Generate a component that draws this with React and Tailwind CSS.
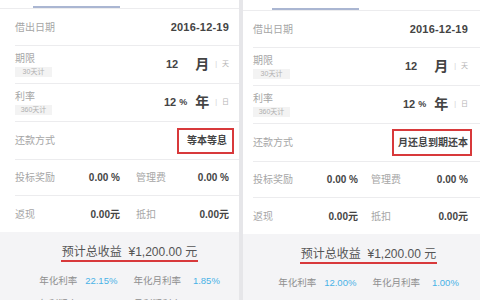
import React from "react";

const FONT = "font-['Liberation_Sans','Noto_Sans_CJK_SC',sans-serif]";

function Panel({ side }) {
  const left = side === "left";
  const rowPad = left ? "ml-[15px] pr-[10px]" : "ml-[10px] pr-[12px]";
  return (
    <div className={left ? "w-[239px] shrink-0 flex flex-col bg-white" : "flex-1 flex flex-col bg-white"}>
      {/* tab bar */}
      <div className={left ? "shrink-0 -mt-[14px] flex border-b border-[#ececee]" : "shrink-0 -mt-[12px] flex border-b border-[#ececee]"}>
        <div className={left ? "ml-[33px] w-[87px] flex flex-col items-center" : "ml-[29px] w-[87px] flex flex-col items-center"}>
          <div className="text-[11px] leading-[14px] text-[#333]">本息计算</div>
          <div className="mt-[6px] h-[2px] w-full bg-[#aab6d2]" />
        </div>
        <div className="ml-[1px] w-[87px] flex flex-col items-center">
          <div className="text-[11px] leading-[14px] text-[#aaa]">日利率计算</div>
          <div className="mt-[6px] h-[2px] w-full" />
        </div>
      </div>

      {/* row 1 */}
      <div className={`${rowPad} shrink-0 h-[37px] flex items-center justify-between border-b border-[#ececee]`}>
        <span className="text-[10px] text-[#a6a6a6]">借出日期</span>
        <span className="text-[11px] font-bold text-[#444] tracking-[0.2px]">2016-12-19</span>
      </div>

      {/* row 2 */}
      <div className={`${rowPad} shrink-0 h-[38px] flex items-center justify-between border-b border-[#ececee]`}>
        <div className="flex flex-col items-start">
          <span className="text-[10px] leading-[12px] text-[#a6a6a6]">期限</span>
          <span className="mt-[2px] h-[10px] w-[37px] bg-[#f3f3f3] text-[7px] leading-[10px] text-[#b0b0b0] text-center">30天计</span>
        </div>
        <div className="flex items-center">
          <span className="text-[11px] font-bold text-[#444]">12</span>
          <span className="ml-[17px] text-[14px] font-bold text-[#444]">月</span>
          <span className="ml-[6px] text-[7px] text-[#cfcfcf]">|</span>
          <span className="ml-[5px] text-[7px] text-[#b5b5b5]">天</span>
        </div>
      </div>

      {/* row 3 */}
      <div className={`${rowPad} shrink-0 h-[38px] flex items-center justify-between border-b border-[#ececee]`}>
        <div className="flex flex-col items-start">
          <span className="text-[10px] leading-[12px] text-[#a6a6a6]">利率</span>
          <span className="mt-[2px] h-[10px] w-[37px] bg-[#f3f3f3] text-[7px] leading-[10px] text-[#b0b0b0] text-center">360天计</span>
        </div>
        <div className="flex items-center">
          <span className="text-[11px] font-bold text-[#444]">12</span>
          <span className="ml-[3px] text-[9px] font-bold text-[#444]">%</span>
          <span className="ml-[8px] text-[14px] font-bold text-[#444]">年</span>
          <span className="ml-[6px] text-[7px] text-[#cfcfcf]">|</span>
          <span className="ml-[5px] text-[7px] text-[#b5b5b5]">日</span>
        </div>
      </div>

      {/* row 4 */}
      <div className={`${rowPad} shrink-0 h-[38px] flex items-center justify-between border-b border-[#ececee]`}>
        <span className="text-[10px] text-[#a6a6a6]">还款方式</span>
        {left ? (
          <span className="-mr-[5px] h-[26px] w-[57px] flex items-center justify-end pr-[5px] border-2 border-[#d8393b] text-[10px] font-bold text-[#444]">等本等息</span>
        ) : (
          <span className="-mr-[4px] h-[27px] w-[80px] flex items-center justify-end pr-[2px] border-2 border-[#d8393b] text-[10px] font-bold text-[#444] whitespace-nowrap">月还息到期还本</span>
        )}
      </div>

      {/* row 5 */}
      <div className={`${rowPad} shrink-0 h-[36px] flex items-center border-b border-[#ececee]`}>
        <div className="w-[105px] flex items-center justify-between">
          <span className="text-[10px] text-[#a6a6a6]">投标奖励</span>
          <span className="text-[10px] font-bold text-[#444]">0.00 %</span>
        </div>
        <div className={left ? "ml-[16px] flex-1 flex items-center justify-between" : "ml-[13px] flex-1 flex items-center justify-between"}>
          <span className="text-[10px] text-[#a6a6a6]">管理费</span>
          <span className="text-[10px] font-bold text-[#444]">0.00 %</span>
        </div>
      </div>

      {/* row 6 */}
      <div className={`${rowPad} shrink-0 h-[36px] flex items-center`}>
        <div className="w-[105px] flex items-center justify-between">
          <span className="text-[10px] text-[#a6a6a6]">返现</span>
          <span className="text-[10px] font-bold text-[#444]">0.00元</span>
        </div>
        <div className={left ? "ml-[16px] flex-1 flex items-center justify-between" : "ml-[13px] flex-1 flex items-center justify-between"}>
          <span className="text-[10px] text-[#a6a6a6]">抵扣</span>
          <span className="text-[10px] font-bold text-[#444]">0.00元</span>
        </div>
      </div>

      {/* summary */}
      <div className="flex-1 shrink-0 bg-[#f4f4f6] flex flex-col items-center pt-[12px]">
        <div className={left ? "ml-[20px] flex flex-col items-center" : "ml-[14px] flex flex-col items-center"}>
          <div className="text-[12px] leading-[16px] text-[#555] border-b-2 border-[#d8393b] px-[1px] whitespace-nowrap">
            预计总收益&nbsp;&nbsp;¥1,200.00 元
          </div>
          <div className="mt-[12px] flex items-center text-[9.5px] leading-[14px] whitespace-nowrap">
            <span className="text-[#8f8f8f]">年化利率</span>
            <span className="ml-[8px] text-[#49b2e6]">{left ? "22.15%" : "12.00%"}</span>
            <span className="ml-[16px] text-[#8f8f8f]">年化月利率</span>
            <span className="ml-[12px] text-[#49b2e6]">{left ? "1.85%" : "1.00%"}</span>
          </div>
          <div className="mt-[9px] flex items-center text-[9.5px] leading-[14px] whitespace-nowrap">
            <span className="text-[#8f8f8f]">年利润率</span>
            <span className="ml-[8px] text-[#49b2e6]">{left ? "22.15%" : "12.00%"}</span>
            <span className="ml-[16px] text-[#8f8f8f]">月利润利率</span>
            <span className="ml-[12px] text-[#49b2e6]">{left ? "1.85%" : "1.00%"}</span>
          </div>
        </div>
      </div>
    </div>
  );
}

export default function App() {
  return (
    <div className={`${FONT} w-[480px] h-[300px] overflow-hidden bg-[#e6e6e9] flex items-start gap-[4px]`}>
      <Panel side="left" />
      <Panel side="right" />
    </div>
  );
}
